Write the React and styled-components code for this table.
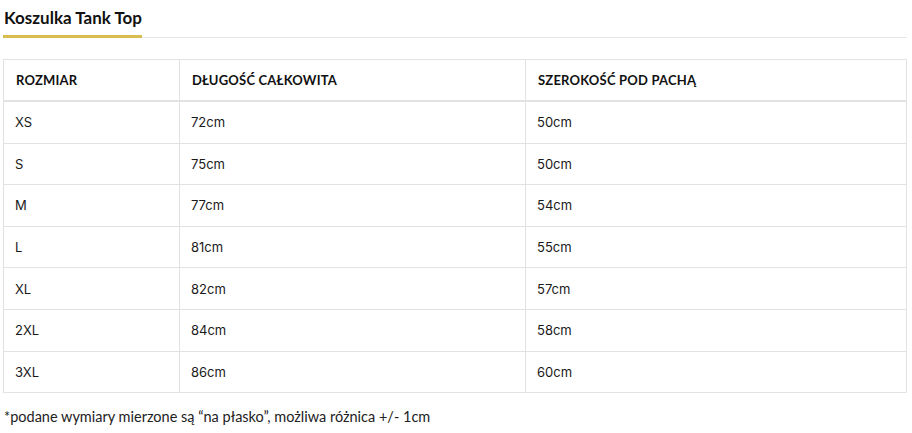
import React from "react";
import styled, { createGlobalStyle } from "styled-components";

const Global = createGlobalStyle`
  html, body { margin: 0; padding: 0; background: #fff; }
  body { font-family: Inter, "Noto Sans", sans-serif; color: #1a1a1a; }
`;

const Page = styled.div`
  padding: 0 5px 0 3px;
`;

const TabBar = styled.div`
  display: flex;
  border-bottom: 1px solid #e6e6e6;
  margin-bottom: 21px;
`;

const Tab = styled.div`
  font-family: Lato, "Open Sans", sans-serif;
  font-weight: 700;
  font-size: 17px;
  line-height: 20px;
  color: #111;
  padding: 8px 0 6px 1px;
  width: 139px;
  border-bottom: 3px solid #d9bd4f;
  margin-bottom: -1px;
  box-sizing: border-box;
  height: 38px;
  white-space: nowrap;
`;

const Table = styled.table`
  width: 904px;
  border-collapse: collapse;
  table-layout: fixed;
  font-size: 13px;
`;

const Head = styled.th`
  font-family: Lato, "Open Sans", sans-serif;
  font-weight: 700;
  font-size: 13px;
  text-align: left;
  color: #111;
  height: 40px;
  padding: 0 12px;
  border: 1px solid #e2e2e2;
  border-bottom: 2px solid #e2e2e4;
  letter-spacing: 0.2px;
`;

const Cell = styled.td`
  font-family: Inter, "Noto Sans", sans-serif;
  font-size: 13px;
  color: #1a1a1a;
  height: 40.6px;
  padding: 0 12px 0 11px;
  border: 1px solid #e2e2e2;
`;

const Note = styled.p`
  font-family: Lato, "Open Sans", sans-serif;
  font-size: 14.5px;
  color: #222;
  margin: 15px 0 0 1px;
`;

const rows = [
  ["XS", "72cm", "50cm"],
  ["S", "75cm", "50cm"],
  ["M", "77cm", "54cm"],
  ["L", "81cm", "55cm"],
  ["XL", "82cm", "57cm"],
  ["2XL", "84cm", "58cm"],
  ["3XL", "86cm", "60cm"],
];

export default function App() {
  return (
    <Page>
      <Global />
      <TabBar>
        <Tab>Koszulka Tank Top</Tab>
      </TabBar>
      <Table>
        <colgroup>
          <col style={{ width: 176 }} />
          <col style={{ width: 346 }} />
          <col />
        </colgroup>
        <thead>
          <tr>
            <Head>ROZMIAR</Head>
            <Head>DŁUGOŚĆ CAŁKOWITA</Head>
            <Head>SZEROKOŚĆ POD PACHĄ</Head>
          </tr>
        </thead>
        <tbody>
          {rows.map((r) => (
            <tr key={r[0]}>
              {r.map((c, i) => (
                <Cell key={i}>{c}</Cell>
              ))}
            </tr>
          ))}
        </tbody>
      </Table>
      <Note>*podane wymiary mierzone są “na płasko”, możliwa różnica +/- 1cm</Note>
    </Page>
  );
}
